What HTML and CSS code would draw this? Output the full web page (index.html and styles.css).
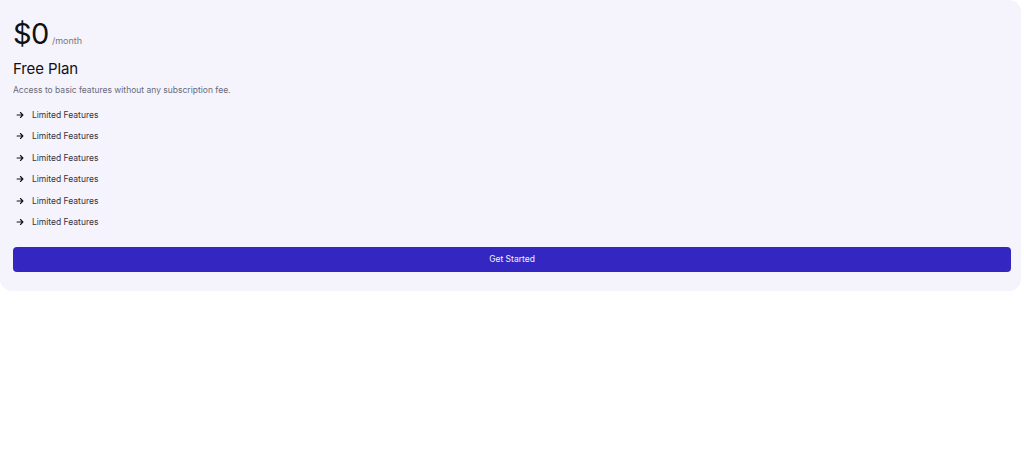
FILE: index.html
```html
<!DOCTYPE html>
<html>
<head>
<meta charset="utf-8">
<link rel="stylesheet" href="styles.css">
</head>
<body>
<div class="card">
  <div class="price"><span class="amount">$0</span><span class="per">/month</span></div>
  <h2 class="title">Free Plan</h2>
  <p class="desc">Access to basic features without any subscription fee.</p>
  <ul class="features">
    <li><svg class="arrow" viewBox="0 0 24 24"><path d="M5 12h14M13 6l6 6-6 6"/></svg>Limited Features</li>
    <li><svg class="arrow" viewBox="0 0 24 24"><path d="M5 12h14M13 6l6 6-6 6"/></svg>Limited Features</li>
    <li><svg class="arrow" viewBox="0 0 24 24"><path d="M5 12h14M13 6l6 6-6 6"/></svg>Limited Features</li>
    <li><svg class="arrow" viewBox="0 0 24 24"><path d="M5 12h14M13 6l6 6-6 6"/></svg>Limited Features</li>
    <li><svg class="arrow" viewBox="0 0 24 24"><path d="M5 12h14M13 6l6 6-6 6"/></svg>Limited Features</li>
    <li><svg class="arrow" viewBox="0 0 24 24"><path d="M5 12h14M13 6l6 6-6 6"/></svg>Limited Features</li>
  </ul>
  <button class="btn">Get Started</button>
</div>
</body>
</html>
```
FILE: styles.css
```css
* { box-sizing: border-box; }
body {
  margin: 0;
  background: #ffffff;
  font-family: Inter, "Noto Sans", sans-serif;
  color: #111;
}
.card {
  width: 1021px;
  height: 291px;
  background: #f5f4fd;
  border-radius: 0 12px 12px 12px;
  padding: 16px 10px 0 13px;
}
.price {
  display: flex;
  align-items: baseline;
  height: 34px;
}
.amount {
  font-size: 29px;
  font-weight: 400;
  color: #111;
  letter-spacing: -0.5px;
}
.per {
  font-size: 9px;
  color: #777;
  margin-left: 3px;
}
.title {
  margin: 10px 0 0;
  font-size: 15px;
  font-weight: 400;
  color: #111;
  height: 18px;
  line-height: 18px;
  letter-spacing: -0.1px;
}
.desc {
  margin: 6px 0 0;
  font-size: 8.5px;
  color: #6a6a78;
  line-height: 12px;
}
.features {
  list-style: none;
  margin: 13px 0 0;
  padding: 0;
  display: flex;
  flex-direction: column;
  gap: 9.4px;
}
.features li {
  display: flex;
  align-items: center;
  height: 12px;
  font-size: 8.5px;
  color: #33333d;
}
.arrow {
  width: 10px;
  height: 10px;
  margin-left: 2px;
  margin-right: 7px;
  fill: none;
  stroke: #111;
  stroke-width: 2.6;
  stroke-linecap: round;
  stroke-linejoin: round;
}
.btn {
  display: block;
  width: 100%;
  height: 25px;
  margin-top: 19px;
  border: none;
  border-radius: 4px;
  background: #3427c1;
  color: #f2f2ff;
  font-family: Inter, "Noto Sans", sans-serif;
  font-size: 8.5px;
}
```
